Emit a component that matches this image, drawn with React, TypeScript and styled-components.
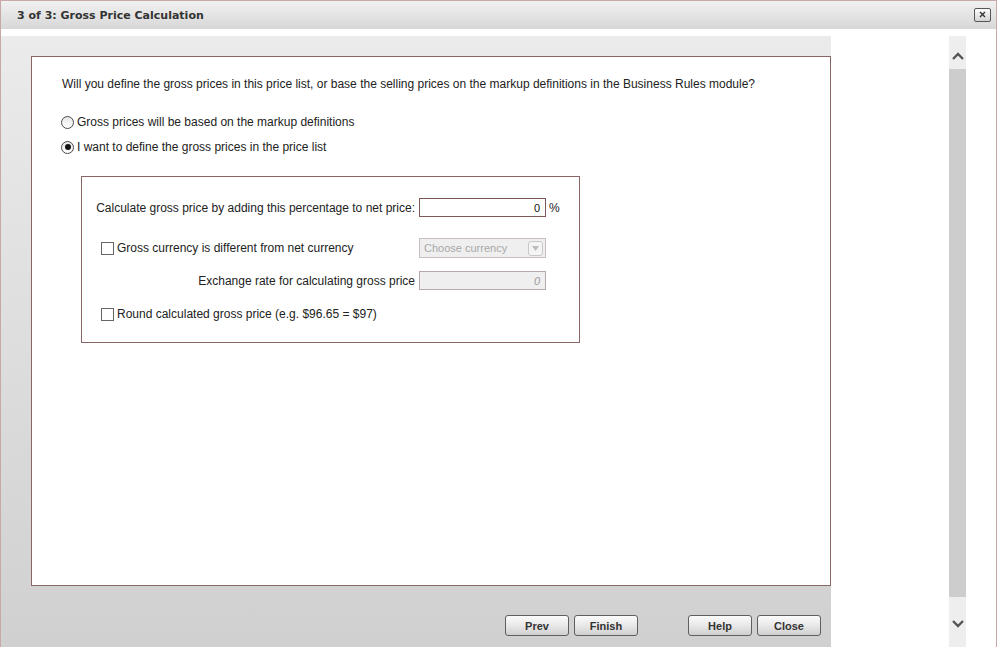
import React from "react";
import styled, { createGlobalStyle } from "styled-components";

const GlobalStyle = createGlobalStyle`
	html, body {
		margin: 0;
		padding: 0;
		background: #fff;
	}
	body {
		font-family: "Liberation Sans", Arial, sans-serif;
		font-size: 12px;
		color: #222;
	}
`;

const Window = styled.div`
	width: 997px;
	height: 647px;
	box-sizing: border-box;
	border: 1px solid #c9a8aa;
	border-bottom: none;
	display: flex;
	flex-direction: column;
	background: #fff;
`;

const TitleBar = styled.div`
	height: 28px;
	flex: none;
	display: flex;
	align-items: center;
	justify-content: space-between;
	padding: 0 5px 0 16px;
	background: linear-gradient(#f1f1f1, #d7d7d7);
`;

const Title = styled.div`
	font-family: "DejaVu Sans", Verdana, sans-serif;
	font-weight: bold;
	font-size: 11px;
	color: #333;
`;

const CloseBox = styled.div`
	width: 15px;
	height: 12px;
	border: 1px solid #555;
	border-radius: 2px;
	background: linear-gradient(#fdfdfd, #d4d4d4);
	display: flex;
	align-items: center;
	justify-content: center;
	margin-top: -1px;
`;

const Body = styled.div`
	flex: 1;
	display: flex;
	padding-top: 7px;
	min-height: 0;
`;

const Main = styled.div`
	width: 830px;
	flex: none;
	display: flex;
	flex-direction: column;
	box-sizing: border-box;
	padding: 20px 0 0 30px;
	background: linear-gradient(#ebebeb, #d0d0d0);
`;

const Panel = styled.div`
	width: 800px;
	height: 530px;
	box-sizing: border-box;
	border: 1px solid #8a6565;
	background: #fff;
	padding: 19px 0 0 30px;
`;

const Question = styled.div`
	line-height: 16px;
`;

const RadioGroup = styled.div`
	margin-top: 22px;
	display: flex;
	flex-direction: column;
	gap: 9px;
`;

const ChoiceRow = styled.label`
	display: flex;
	align-items: center;
	height: 16px;
	gap: 3px;
	margin-left: -1px;
`;

const RadioDot = styled.span<{ checked?: boolean }>`
	width: 11px;
	height: 11px;
	border-radius: 50%;
	border: 1px solid #4a4a4a;
	background: linear-gradient(#e6e6e6, #ffffff);
	display: flex;
	align-items: center;
	justify-content: center;
	&::after {
		content: "";
		width: 6px;
		height: 6px;
		border-radius: 50%;
		background: ${p => (p.checked ? "#111" : "transparent")};
	}
`;

const InnerBox = styled.div`
	margin: 21px 0 0 19px;
	width: 499px;
	height: 167px;
	box-sizing: border-box;
	border: 1px solid #8a6565;
	padding: 21px 0 0 15px;
`;

const FieldRow = styled.div<{ top?: number }>`
	display: flex;
	align-items: center;
	margin-top: ${p => p.top || 0}px;
`;

const LabelCell = styled.div<{ align?: string }>`
	width: 318px;
	flex: none;
	display: flex;
	align-items: center;
	justify-content: ${p => p.align || "flex-end"};
	gap: 3px;
	padding-right: 4px;
	white-space: nowrap;
`;

const CheckBox = styled.span`
	width: 11px;
	height: 11px;
	border: 1px solid #666;
	background: #fff;
	flex: none;
	margin-left: 4px;
`;

const TextInput = styled.div<{ disabled?: boolean }>`
	width: 127px;
	height: 19px;
	box-sizing: border-box;
	border: 1px solid ${p => (p.disabled ? "#b8a8a8" : "#7d5656")};
	background: ${p => (p.disabled ? "#efefef" : "#fff")};
	color: ${p => (p.disabled ? "#999" : "#111")};
	font-style: ${p => (p.disabled ? "italic" : "normal")};
	display: flex;
	align-items: center;
	justify-content: flex-end;
	padding-right: 5px;
	font-size: 11px;
`;

const SelectBox = styled.div`
	width: 127px;
	height: 20px;
	box-sizing: border-box;
	border: 1px solid #c8c0c0;
	background: #efefef;
	color: #a8a8a8;
	font-size: 11px;
	display: flex;
	align-items: center;
	justify-content: space-between;
	padding: 0 2px 0 4px;
`;

const SelectArrow = styled.span`
	width: 13px;
	height: 13px;
	border: 1px solid #c8c8c8;
	border-radius: 3px;
	background: #f4f4f4;
	display: flex;
	align-items: center;
	justify-content: center;
`;

const Unit = styled.span`
	margin-left: 3px;
`;

const Footer = styled.div`
	flex: 1;
	display: flex;
	justify-content: flex-end;
	align-items: flex-start;
	padding: 29px 10px 0 0;
	gap: 5px;
`;

const Spacer = styled.div`
	width: 40px;
`;

const Button = styled.button`
	width: 64px;
	height: 21px;
	box-sizing: border-box;
	border: 1px solid #5f5f5f;
	border-radius: 3px;
	background: linear-gradient(#fbfbfb, #e6e6e6 55%, #cfcfcf);
	font-family: "Liberation Sans", Arial, sans-serif;
	font-weight: bold;
	font-size: 11px;
	color: #333;
	padding: 0;
`;

const Side = styled.div`
	flex: 1;
	padding-left: 118px;
	display: flex;
`;

const Scrollbar = styled.div`
	width: 17px;
	display: flex;
	flex-direction: column;
	align-items: center;
	background: #eeeeee;
`;

const ScrollButton = styled.div<{ h: number; pad: number }>`
	height: ${p => p.h}px;
	box-sizing: border-box;
	padding-top: ${p => p.pad}px;
	flex: none;
	display: flex;
	justify-content: center;
`;

const Thumb = styled.div`
	flex: 1;
	width: 17px;
	background: #cdcdcd;
`;

const Chevron = ({ up }: { up?: boolean }) => (
	<svg width="12" height="8" viewBox="0 0 12 8">
		<path
			d={up ? "M1 7 L6 2 L11 7" : "M1 1 L6 6 L11 1"}
			fill="none"
			stroke="#555"
			strokeWidth="2.4"
		/>
	</svg>
);

export default function App() {
	return (
		<>
			<GlobalStyle />
			<Window>
				<TitleBar>
					<Title>3 of 3: Gross Price Calculation</Title>
					<CloseBox>
						<svg width="7" height="7" viewBox="0 0 7 7">
							<path d="M1 1 L6 6 M6 1 L1 6" stroke="#333" strokeWidth="1.4" />
						</svg>
					</CloseBox>
				</TitleBar>
				<Body>
					<Main>
						<Panel>
							<Question>
								Will you define the gross prices in this price list, or base the selling prices on
								the markup definitions in the Business Rules module?
							</Question>
							<RadioGroup>
								<ChoiceRow>
									<RadioDot />
									Gross prices will be based on the markup definitions
								</ChoiceRow>
								<ChoiceRow>
									<RadioDot checked />
									I want to define the gross prices in the price list
								</ChoiceRow>
							</RadioGroup>
							<InnerBox>
								<FieldRow>
									<LabelCell>Calculate gross price by adding this percentage to net price:</LabelCell>
									<TextInput>0</TextInput>
									<Unit>%</Unit>
								</FieldRow>
								<FieldRow top={21}>
									<LabelCell align="flex-start">
										<CheckBox />
										Gross currency is different from net currency
									</LabelCell>
									<SelectBox>
										Choose currency
										<SelectArrow>
											<svg width="7" height="5" viewBox="0 0 7 5">
												<path d="M0 0 H7 L3.5 5 Z" fill="#bbb" />
											</svg>
										</SelectArrow>
									</SelectBox>
								</FieldRow>
								<FieldRow top={13}>
									<LabelCell>Exchange rate for calculating gross price</LabelCell>
									<TextInput disabled>0</TextInput>
								</FieldRow>
								<FieldRow top={17}>
									<LabelCell align="flex-start">
										<CheckBox />
										Round calculated gross price (e.g. $96.65 = $97)
									</LabelCell>
								</FieldRow>
							</InnerBox>
						</Panel>
						<Footer>
							<Button>Prev</Button>
							<Button>Finish</Button>
							<Spacer />
							<Button>Help</Button>
							<Button>Close</Button>
						</Footer>
					</Main>
					<Side>
						<Scrollbar>
							<ScrollButton h={33} pad={16}>
								<Chevron up />
							</ScrollButton>
							<Thumb />
							<ScrollButton h={50} pad={23}>
								<Chevron />
							</ScrollButton>
						</Scrollbar>
					</Side>
				</Body>
			</Window>
		</>
	);
}
